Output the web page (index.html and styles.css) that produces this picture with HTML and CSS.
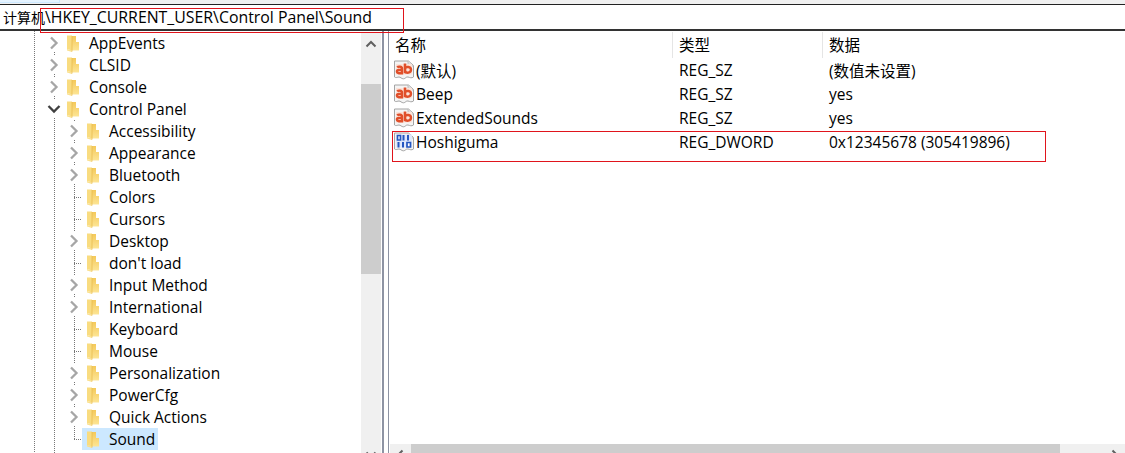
FILE: index.html
```html
<!DOCTYPE html>
<html lang="zh">
<head>
<meta charset="utf-8">
<title>Registry Editor</title>
<link rel="stylesheet" href="styles.css">
</head>
<body>
<svg class="defs" width="0" height="0" aria-hidden="true">
  <defs>
    <linearGradient id="fold" x1="0" y1="0" x2="0" y2="1">
      <stop offset="0" stop-color="#f4c95a"/>
      <stop offset="1" stop-color="#fde595"/>
    </linearGradient>
    <symbol id="folder" viewBox="0 0 12 17">
      <path d="M0 .5h5V15.500L0 14z" fill="#f9dc80"/>
      <path d="M5 1h4v6h3v8.500H5z" fill="url(#fold)"/>
      <path d="M0 14l5 1.500V17l-5-1.500z" fill="#fae08e"/>
      <path d="M5 1v15.500" stroke="#e8bb50" stroke-width=".8"/>
    </symbol>
    <symbol id="sz" viewBox="0 0 20 20">
      <path d="M.5 1h14l5 4.500V17c-2 1.500-3.500.5-5.500 0s-2.500 1.800-4.500 1.800S6.500 17 5 17s-3 1.300-4.500 0z" fill="#f4f4f4" stroke="#a4a4a4"/>
      <path d="M14 1v5h5.500" fill="#dcdcdc" stroke="#b4b4b4" stroke-width=".8"/>
      <path d="M2 4h16v10.500H2z" fill="#fbe3d9"/>
      <path d="M3.200 7.300c1-1 4.800-1 4.800 1.200v4.700H4.800c-2.500 0-2.600-3.200.1-3.200H8" fill="none" stroke="#e04f2a" stroke-width="2.400"/>
      <path d="M11 3.500v9.700" fill="none" stroke="#e04f2a" stroke-width="2.600"/>
      <path d="M11 8c1-1.500 6-1.700 6 1.800s-5 3.500-6 1.600" fill="none" stroke="#e04f2a" stroke-width="2.400"/>
    </symbol>
    <symbol id="dw" viewBox="0 0 20 20">
      <path d="M.5 1h14l5 4.500V17c-2 1.500-3.500.5-5.500 0s-2.500 1.800-4.500 1.800S6.500 17 5 17s-3 1.300-4.500 0z" fill="#f4f4f4" stroke="#a4a4a4"/>
      <path d="M14 1v5h5.500" fill="#dcdcdc" stroke="#b4b4b4" stroke-width=".8"/>
      <path d="M2 2.500h16v13H2z" fill="#dfe8fb"/>
      <path d="M3.500 3.500h3v4.500h-3zM13 10.500h3.500v4.500H13z" fill="#fff" stroke="#2456c0" stroke-width="1.700"/>
      <path d="M9.500 3v5.500M14 3v5.500M4.500 10v5.500M9 10v5.500" fill="none" stroke="#2456c0" stroke-width="2"/>
    </symbol>
  </defs>
</svg>

<div class="app">
  <div class="strip"><div class="menu-hover"></div></div>
  <div class="address"><span class="root">计算机</span>\HKEY_CURRENT_USER\Control Panel\Sound</div>
  <div class="main">
    <div class="tree">
      <div class="rows">
        <div class="row l1"><span class="exp"><svg viewBox="0 0 10 14"><path d="M2 1.500L7.500 7 2 12.500"/></svg></span><span class="item"><svg class="fld"><use href="#folder"/></svg><span>AppEvents</span></span></div>
        <div class="row l1"><span class="exp"><svg viewBox="0 0 10 14"><path d="M2 1.500L7.500 7 2 12.500"/></svg></span><span class="item"><svg class="fld"><use href="#folder"/></svg><span>CLSID</span></span></div>
        <div class="row l1"><span class="exp"><svg viewBox="0 0 10 14"><path d="M2 1.500L7.500 7 2 12.500"/></svg></span><span class="item"><svg class="fld"><use href="#folder"/></svg><span>Console</span></span></div>
        <div class="row l1"><span class="exp open"><svg viewBox="0 0 14 10"><path d="M1.500 2L7 7.500 12.500 2"/></svg></span><span class="item"><svg class="fld"><use href="#folder"/></svg><span>Control Panel</span></span></div>
        <div class="row l2"><span class="exp"><svg viewBox="0 0 10 14"><path d="M2 1.500L7.500 7 2 12.500"/></svg></span><span class="item"><svg class="fld"><use href="#folder"/></svg><span>Accessibility</span></span></div>
        <div class="row l2"><span class="exp"><svg viewBox="0 0 10 14"><path d="M2 1.500L7.500 7 2 12.500"/></svg></span><span class="item"><svg class="fld"><use href="#folder"/></svg><span>Appearance</span></span></div>
        <div class="row l2"><span class="exp"><svg viewBox="0 0 10 14"><path d="M2 1.500L7.500 7 2 12.500"/></svg></span><span class="item"><svg class="fld"><use href="#folder"/></svg><span>Bluetooth</span></span></div>
        <div class="row l2 leaf"><span class="exp"></span><span class="item"><svg class="fld"><use href="#folder"/></svg><span>Colors</span></span></div>
        <div class="row l2 leaf"><span class="exp"></span><span class="item"><svg class="fld"><use href="#folder"/></svg><span>Cursors</span></span></div>
        <div class="row l2"><span class="exp"><svg viewBox="0 0 10 14"><path d="M2 1.500L7.500 7 2 12.500"/></svg></span><span class="item"><svg class="fld"><use href="#folder"/></svg><span>Desktop</span></span></div>
        <div class="row l2 leaf"><span class="exp"></span><span class="item"><svg class="fld"><use href="#folder"/></svg><span>don't load</span></span></div>
        <div class="row l2"><span class="exp"><svg viewBox="0 0 10 14"><path d="M2 1.500L7.500 7 2 12.500"/></svg></span><span class="item"><svg class="fld"><use href="#folder"/></svg><span>Input Method</span></span></div>
        <div class="row l2"><span class="exp"><svg viewBox="0 0 10 14"><path d="M2 1.500L7.500 7 2 12.500"/></svg></span><span class="item"><svg class="fld"><use href="#folder"/></svg><span>International</span></span></div>
        <div class="row l2 leaf"><span class="exp"></span><span class="item"><svg class="fld"><use href="#folder"/></svg><span>Keyboard</span></span></div>
        <div class="row l2 leaf"><span class="exp"></span><span class="item"><svg class="fld"><use href="#folder"/></svg><span>Mouse</span></span></div>
        <div class="row l2"><span class="exp"><svg viewBox="0 0 10 14"><path d="M2 1.500L7.500 7 2 12.500"/></svg></span><span class="item"><svg class="fld"><use href="#folder"/></svg><span>Personalization</span></span></div>
        <div class="row l2"><span class="exp"><svg viewBox="0 0 10 14"><path d="M2 1.500L7.500 7 2 12.500"/></svg></span><span class="item"><svg class="fld"><use href="#folder"/></svg><span>PowerCfg</span></span></div>
        <div class="row l2"><span class="exp"><svg viewBox="0 0 10 14"><path d="M2 1.500L7.500 7 2 12.500"/></svg></span><span class="item"><svg class="fld"><use href="#folder"/></svg><span>Quick Actions</span></span></div>
        <div class="row l2 leaf last"><span class="exp"></span><span class="item selected"><svg class="fld"><use href="#folder"/></svg><span>Sound</span></span></div>
      </div>
      <div class="vscroll">
        <svg class="arrow up" viewBox="0 0 12 8"><path d="M1.500 6.500L6 2l4.500 4.500"/></svg>
        <div class="vtrack"><div class="vthumb"></div></div>
        <svg class="arrow" viewBox="0 0 12 8"><path d="M1.500 1.500L6 6l4.500-4.500"/></svg>
      </div>
    </div>
    <div class="splitter"></div>
    <div class="list">
      <div class="grid head">
        <div class="cell">名称</div>
        <div class="cell">类型</div>
        <div class="cell">数据</div>
      </div>
      <div class="grid vrow">
        <div class="nm"><svg class="ric"><use href="#sz"/></svg><span>(默认)</span></div>
        <div class="cell">REG_SZ</div>
        <div class="cell">(数值未设置)</div>
      </div>
      <div class="grid vrow">
        <div class="nm"><svg class="ric"><use href="#sz"/></svg><span>Beep</span></div>
        <div class="cell">REG_SZ</div>
        <div class="cell">yes</div>
      </div>
      <div class="grid vrow">
        <div class="nm"><svg class="ric"><use href="#sz"/></svg><span>ExtendedSounds</span></div>
        <div class="cell">REG_SZ</div>
        <div class="cell">yes</div>
      </div>
      <div class="grid vrow">
        <div class="nm"><svg class="ric"><use href="#dw"/></svg><span>Hoshiguma</span></div>
        <div class="cell">REG_DWORD</div>
        <div class="cell">0x12345678 (305419896)</div>
      </div>
      <div class="spacer"></div>
      <div class="hscroll">
        <svg class="harrow" viewBox="0 0 8 12"><path d="M6.500 1.500L2 6l4.500 4.500"/></svg>
        <div class="hthumb"></div>
        <svg class="harrow" viewBox="0 0 8 12"><path d="M1.500 1.500L6 6l-4.500 4.500"/></svg>
      </div>
    </div>
  </div>
  <div class="mark mark-path"></div>
  <div class="mark mark-row"></div>
</div>
</body>
</html>
```

FILE: styles.css
```css
* { box-sizing: border-box; }
html, body { margin: 0; padding: 0; background: #fff; }
body { font-family: "Open Sans", "Noto Sans CJK SC", sans-serif; font-size: 15.5px; color: #000; }
.defs { display: block; height: 0; }

.app { position: relative; width: 1125px; height: 453px; display: flex; flex-direction: column; overflow: hidden; }

.strip { height: 4px; background: #f0f0f0; flex: none; }
.menu-hover { width: 60px; height: 3px; background: #e5f3ff; border-bottom: 1px solid #cce8ff; border-right: 1px solid #cce8ff; }
.address {
  flex: none; height: 27px; padding-left: 3px;
  border-top: 1px solid #222; border-bottom: 2px solid #333;
  font-size: 15.85px; line-height: 25px; white-space: nowrap; background: #fff;
}
.root { font-size: 14px; }

.main { flex: 1; min-height: 0; display: flex; }

.tree {
  flex: none; width: 381px; display: flex; padding-top: 1px;
  background-image: linear-gradient(#777 50%, transparent 50%);
  background-size: 1px 2px; background-repeat: repeat-y; background-position: 34px 0;
}
.rows {
  width: 361px; flex: none; display: flex; flex-direction: column;
  background-image: linear-gradient(#777 50%, transparent 50%);
  background-size: 1px 2px; background-repeat: repeat-y; background-position: 54px 0;
}
.row { height: 22px; flex: none; display: flex; align-items: center; }
.l1 { padding-left: 46px; }
.l2 {
  padding-left: 66px;
  background-image: linear-gradient(#777 50%, transparent 50%);
  background-size: 1px 2px; background-repeat: repeat-y; background-position: 74px 0;
}
.exp { width: 16px; height: 18px; flex: none; display: flex; align-items: center; justify-content: center; background: #fff; }
.exp svg { width: 10px; height: 14px; fill: none; stroke: #a6a6a6; stroke-width: 2.300; }
.exp.open svg { width: 14px; height: 10px; stroke: #404040; }
.leaf .exp {
  height: 1px; margin-left: 8px; width: 8px;
  background: repeating-linear-gradient(90deg, #777 0 1px, transparent 1px 2px);
}
.last {
  background: repeating-linear-gradient(#777 0 1px, transparent 1px 2px) 74px 0 / 1px 11px no-repeat;
}

.item { height: 22px; display: flex; align-items: center; padding: 0 3px 0 5px; white-space: nowrap; }
.fld { width: 12px; height: 17px; flex: none; margin-right: 10px; }
.selected { background: #cce8ff; }

.vscroll { width: 20px; flex: none; background: #f0f0f0; display: flex; flex-direction: column; align-items: center; overflow: hidden; }
.arrow { width: 12px; height: 8px; flex: none; fill: none; stroke: #606060; stroke-width: 2; }
.arrow.up { margin: 8px 0 7px; }
.vtrack { flex: none; height: 396px; width: 100%; }
.vthumb { height: 190px; margin-top: 29px; background: #cdcdcd; }

.splitter { flex: none; width: 7px; margin-left: 1px; border-left: 2px solid #8d93a3; border-right: 1px solid #8d93a3; }

.list { flex: 1; min-width: 0; display: flex; flex-direction: column; }
.grid { display: grid; grid-template-columns: 284px 150px 1fr; flex: none; }
.head { height: 26px; margin-top: 1px; }
.head .cell { padding-left: 6px; line-height: 26px; border-right: 1px solid #e5e5e5; }
.head .cell:last-child { border-right: 0; }
.vrow { height: 24px; align-items: center; }
.vrow .cell { padding-left: 6px; }
.nm { display: flex; align-items: center; padding-left: 5px; }
.ric { width: 20px; height: 20px; flex: none; margin-right: 2px; }
.spacer { flex: 1; }
.hscroll { flex: none; height: 9px; margin-left: 1px; background: #f0f0f0; display: flex; justify-content: space-between; overflow: hidden; }
.harrow { width: 8px; height: 12px; margin: 5px 6px 0; flex: none; fill: none; stroke: #606060; stroke-width: 2; }
.hthumb { width: 649px; background: #cdcdcd; margin-left: 1px; margin-right: auto; }

.mark { position: absolute; border: 1px solid #e0141c; }
.mark-path { left: 40px; top: 8px; width: 364px; height: 25px; }
.mark-row { left: 392px; top: 131px; width: 654px; height: 31px; }
```
